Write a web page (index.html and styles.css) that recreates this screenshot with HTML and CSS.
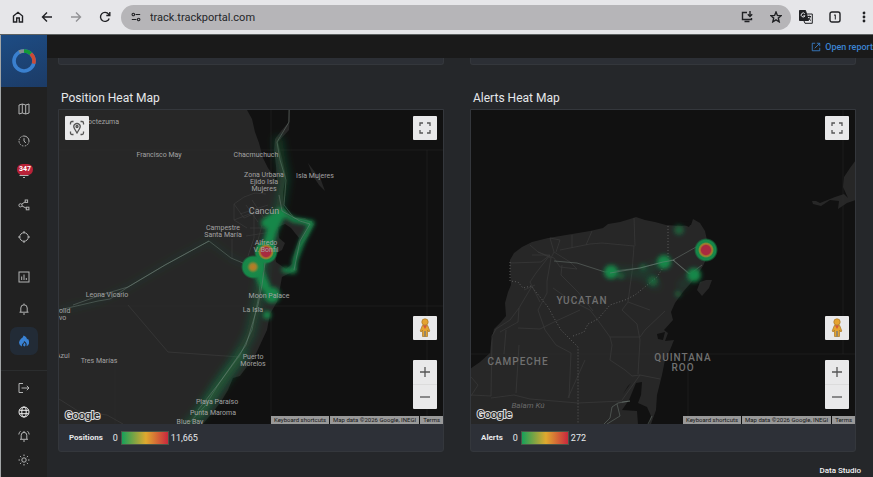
FILE: index.html
```html
<!DOCTYPE html>
<html lang="en">
<head>
<meta charset="utf-8">
<title>Track Portal</title>
<link rel="stylesheet" href="styles.css">
</head>
<body>
<header class="browser">
  <button class="tool" aria-label="Home"><svg viewBox="0 0 12 12"><path d="M1.500 5 6 1.300 10.500 5V11H7.300V7H4.700V11H1.500Z"/></svg></button>
  <button class="tool" aria-label="Back"><svg viewBox="0 0 12 12"><path d="M11 6H1.500M6 1.500 1.500 6 6 10.500"/></svg></button>
  <button class="tool faded" aria-label="Forward"><svg viewBox="0 0 12 12"><path d="M1 6H10.500M6 1.500 10.500 6 6 10.500"/></svg></button>
  <button class="tool" aria-label="Reload"><svg viewBox="0 0 12 12"><path d="M10.200 7.500A4.500 4.500 0 1 1 9.600 3.200L10.800 4.400M10.800 1V4.500H7.300"/></svg></button>
  <div class="address">
    <svg class="tune" viewBox="0 0 12 12"><path d="M5.500 3H11M1 9H6.500"/><circle cx="2.800" cy="3" r="1.500"/><circle cx="9.200" cy="9" r="1.500"/></svg>
    <input class="url" type="text" aria-label="Address" value="track.trackportal.com">
    <button class="tool" aria-label="Install"><svg viewBox="0 0 12 12"><path d="M6 1.500H1.500V8.500H10.500V7M9 0V5M6.800 3.200 9 5.400 11.200 3.200M3.500 10.500H8.500"/></svg></button>
    <button class="tool" aria-label="Bookmark"><svg viewBox="0 0 12 12"><path d="M6 1 7.400 4.400 11.100 4.700 8.300 7.100 9.200 10.800 6 8.800 2.800 10.800 3.700 7.100 .9 4.700 4.600 4.400Z"/></svg></button>
  </div>
  <button class="tool" aria-label="Translate"><svg class="wide" viewBox="0 0 14 14"><path d="M7 4H13.300V13.300H6L5 11" /><path class="solid" d="M.5.5H6.500L9.500 10.500H.5Z"/><path class="cut" d="M5.800 3.800A2 2 0 1 0 6 5.800H4.300"/><path class="thin" d="M8.500 6.500H12M10.200 5.500V6.500M11.300 6.500Q11 9 8.800 10.500M9.300 8Q10.300 9.500 12 10.500"/></svg></button>
  <button class="tool" aria-label="Tabs"><svg viewBox="0 0 12 12"><rect x="1" y="1" width="10" height="10" rx="2"/><path class="thin" d="M5 4.300 6.300 3.800V8.500"/></svg></button>
  <button class="tool last" aria-label="Menu"><svg viewBox="0 0 12 12"><g class="solid"><circle cx="6" cy="2" r=".7"/><circle cx="6" cy="6" r=".7"/><circle cx="6" cy="10" r=".7"/></g></svg></button>
</header>

<div class="app">
  <aside class="sidebar">
    <a class="brand" href="#" aria-label="Track Portal">
      <svg viewBox="0 0 24 24"><g fill="none" stroke-width="3.600"><circle cx="12" cy="12" r="10" stroke="#3a80cf"/><path d="M7.200 3.200A10 10 0 0 1 12 2" stroke="#858d91"/><path d="M12 2A10 10 0 0 1 18.800 4.700" stroke="#129b36"/><path d="M18.800 4.700A10 10 0 0 1 21.600 14.600" stroke="#ce4a34"/></g></svg>
    </a>
    <nav class="nav">
      <a href="#" aria-label="Map"><svg viewBox="0 0 12 12"><path d="M1 2 4.300 1 7.700 2 11 1V10L7.700 11 4.300 10 1 11ZM4.300 1V10M7.700 2V11"/></svg></a>
      <a href="#" aria-label="History"><svg viewBox="0 0 12 12"><path stroke-dasharray="1.600 1" d="M6 1A5 5 0 0 0 6 11"/><path d="M6 1A5 5 0 0 1 11 6" /><path stroke-dasharray="1.600 1" d="M11 6A5 5 0 0 1 6 11"/><path d="M6 3.200V6L7.800 8"/></svg></a>
      <a href="#" aria-label="Alerts"><svg viewBox="0 0 12 12"><path d="M1.500 8.500H10.500M5 10.500H7M3 8.500V4.500A3 3 0 0 1 9 4.500V8.500"/></svg><span class="badge">347</span></a>
      <a href="#" aria-label="Routes"><svg viewBox="0 0 12 12"><rect x="7.200" y="1" width="2.400" height="2.400"/><circle cx="2.500" cy="6.300" r="1.600"/><rect x="8.300" y="8.200" width="2.600" height="2.600"/><path d="M7.200 2.800 3.700 5.200M4 7 8.300 9.200"/></svg></a>
      <a href="#" aria-label="Geofence"><svg viewBox="0 0 12 12"><circle cx="6" cy="6" r="4.300"/><path d="M6 0V2.300M6 9.700V12M0 6H2.300M9.700 6H12"/></svg></a>
      <a class="spaced" href="#" aria-label="Reports"><svg viewBox="0 0 12 12"><rect x="1" y="1" width="10" height="10"/><path d="M3.700 5.500V9M6 3.500V9M8.300 7V9"/></svg></a>
      <a href="#" aria-label="Notifications"><svg viewBox="0 0 12 12"><path d="M1.500 9.200H10.500M2.800 9V5A3.200 3.200 0 0 1 9.200 5V9M6 .5V1.800M5 11H7"/></svg></a>
      <a class="active" href="#" aria-label="Heat maps"><svg viewBox="0 0 12 12"><path class="flame" d="M5.500.5Q9 2 9 4.500L10 3.700Q11.500 6 11 8.500 10.500 10.500 8.500 11.300 9.500 8 6 6 6.200 7.500 4.700 8.500 3.400 9.700 4 11.400 1.200 10.500 1 7.700 1 5.500 3 3.700 5.500 2.500 5.500.5ZM6.500 7.500Q8.500 9.500 6.700 11.500 4.500 11 5.300 9.500Z"/></svg></a>
    </nav>
    <nav class="nav foot">
      <a href="#" aria-label="Log out"><svg viewBox="0 0 12 12"><path d="M5 1.500H1V10.500H5M3.500 6H11M8.800 3.800 11 6 8.800 8.200"/></svg></a>
      <a class="bright" href="#" aria-label="Language"><svg viewBox="0 0 12 12"><circle cx="6" cy="6" r="5"/><ellipse cx="6" cy="6" rx="2.200" ry="5"/><path d="M1.500 4.300H10.500M1.500 7.700H10.500"/></svg></a>
      <a href="#" aria-label="Sound"><svg viewBox="0 0 12 12"><path d="M2 9.300H10M3.200 9V5.200A2.800 2.800 0 0 1 8.800 5.200V9M6 1V2.300M5 11H7M.8 4.500Q1 2.500 2.500 1.200M11.200 4.500Q11 2.500 9.500 1.200"/></svg></a>
      <a href="#" aria-label="Theme"><svg viewBox="0 0 12 12"><circle cx="6" cy="6" r="2.200"/><path d="M6 .5V2M6 10V11.500M.5 6H2M10 6H11.500M2.100 2.100 3.200 3.200M8.800 8.800 9.900 9.900M2.100 9.900 3.200 8.800M8.800 3.200 9.900 2.100"/></svg></a>
    </nav>
  </aside>

  <main class="main">
    <div class="topbar">
      <a class="open" href="#"><svg viewBox="0 0 12 12"><path d="M5 1.500H1.500V10.500H10.500V7M7 1.500H10.500V5M10.500 1.500 4.500 7.500"/></svg>Open report</a>
    </div>
    <div class="report">
      <section class="column">
        <div class="previous"></div>
        <h2>Position Heat Map</h2>
        <div class="card">
          <div class="map">
            <svg class="canvas" viewBox="59 110 384 314" preserveAspectRatio="xMidYMid slice">
              <defs>
                <filter id="soft" x="-30%" y="-30%" width="160%" height="160%"><feGaussianBlur stdDeviation="2"/></filter>
                <filter id="wide" x="-30%" y="-30%" width="160%" height="160%"><feGaussianBlur stdDeviation="4"/></filter>
                <radialGradient id="hot"><stop offset="0" stop-color="#a82a40"/><stop offset=".38" stop-color="#a82a40"/><stop offset=".48" stop-color="#a8702c"/><stop offset=".56" stop-color="#8a8535"/><stop offset=".66" stop-color="#168749"/><stop offset=".82" stop-color="#168749"/><stop offset="1" stop-color="#168749" stop-opacity="0"/></radialGradient>
                <radialGradient id="warm"><stop offset="0" stop-color="#c07a22"/><stop offset=".25" stop-color="#a0812d"/><stop offset=".5" stop-color="#1c8848"/><stop offset=".82" stop-color="#168749"/><stop offset="1" stop-color="#168749" stop-opacity="0"/></radialGradient>
              </defs>
              <rect class="land" x="0" y="0" width="900" height="500"/>
              <path class="sea" d="M247 110 252 119 255 132 259 143 263 158 268 168 274 176 277 184 276 166 274 150 275 139 281 131 288 123 289 110H900V500H150L203 424 213 412 222 400 228 390 233 378 240 376 246 368 254 358 260 345 267 330 270 314 277 302 280 288 282 277 290 273 297 270 295 262 300 248 308 236 314 224 305 218 292 217 284 208 283 192 286 176 282 158 278 142 289 130 290 110Z"/>
              <path class="sea" d="M278 227 285 224 291 228 299 238 295 250 292 264 286 269 276 262 275 254 282 250 285 243 279 238Z"/>
              <path class="land" d="M308 163 314 171 321 180 325 191 319 185 313 176Z"/>
              <g class="grid"><path d="M271 110V424M59 306H443M427 150V424M59 150H443M115 360V424"/></g>
              <g class="street"><path d="M234 204 244 197 255 193 266 194M234 204V220L247 228M234 220 252 213M240 214 268 205M246 205 258 222M252 200 264 218M254 213V238L248 256M262 225 258 240M232 239V258M234 204 244 218 262 210M264 218 283 213M250 228H268M246 236 272 232"/><path d="M128 305 168 352 240 357M59 399 78 411 107 415 123 424"/></g>
              <path class="road" d="M59 310 98 301 110 299 128 287 165 265 209 241"/>
              <path class="road" d="M73 305 101 295 128 287 165 265 209 241 231 258 255 268M289 110V122L277 142 280 160 286 180 284 205 294 218 312 222M263 255 262 272 258 300 252 330 240 355 220 382 205 406 188 424"/>
              <path class="haze thin-haze" d="M59 310 98 301 128 287 165 265 209 241 231 258 255 268"/>
              <path class="haze" d="M278 137 281 158 285 178 280 206 266 250 262 272 258 300 250 335 237 358 217 385 200 412 184 430"/>
              <g class="heat"><path d="M266 223 277 213 273 226 266 250M282 213 294 220 312 223 302 242 295 260 294 271 284 270M252 268 265 285 274 294" stroke-width="5"/><path d="M266 223 281 213 272 230 266 252 257 268 265 286" stroke-width="10"/><circle cx="272" cy="295" r="8"/><circle cx="267" cy="315" r="4"/><circle cx="309" cy="223" r="3"/></g>
              <path class="haze" d="M245 352 222 384 198 418"/>
              <path class="road" d="M279 195 282 211 300 221 310 224 300 241 294 270M266 255 262 285 258 305 246 345 220 382 198 410"/>
              <circle cx="253" cy="267" r="12" fill="url(#warm)"/>
              <circle cx="266" cy="252" r="12" fill="url(#hot)"/>
              <g class="place">
                <text class="edge" x="88" y="124">octezuma</text><text x="159" y="157">Francisco May</text><text x="256" y="157">Chacmuchuch</text>
                <text x="264" y="177">Zona Urbana</text><text x="264" y="184">Ejido Isla</text><text x="264" y="191">Mujeres</text><text x="315" y="178">Isla Mujeres</text>
                <text class="city" x="264" y="214">Cancún</text><text x="223" y="230">Campestre</text><text x="223" y="237">Santa María</text><text x="266" y="245">Alfredo</text><text x="266" y="252">V. Bonfil</text>
                <text x="107" y="297">Leona Vicario</text><text class="edge" x="59" y="313">olid</text><text class="edge" x="59" y="320">vo</text><text class="edge" x="56" y="358">Azul</text><text x="99" y="363">Tres Marías</text>
                <text x="269" y="298">Moon Palace</text><text x="253" y="312">La Isla</text><text x="253" y="359">Puerto</text><text x="253" y="366">Morelos</text><text x="217" y="404">Playa Paraíso</text><text x="213" y="415">Punta Maroma</text><text x="190" y="424">Blue Bay</text>
              </g>
              <text class="google" x="65" y="419">Google</text>
            </svg>
            <button class="control focus" aria-label="Focus location"><svg viewBox="0 0 16 16"><path d="M1.500 4.500V3Q1.500 1.500 3 1.500H4.500M11.500 1.500H13Q14.500 1.500 14.500 3V4.500M14.500 11.500V13Q14.500 14.500 13 14.500H11.500M4.500 14.500H3Q1.500 14.500 1.500 13V11.500M8 13 5.400 8.500Q4 6.200 5.600 4.400 8 2.600 10.400 4.400 12 6.200 10.600 8.500Z"/><circle cx="8" cy="6.500" r="1"/></svg></button>
            <button class="control full" aria-label="Full screen"><svg viewBox="0 0 12 12"><path d="M1 4V1H4M8 1H11V4M11 8V11H8M4 11H1V8"/></svg></button>
            <div class="stack">
              <button class="control" aria-label="Street View"><svg class="pegman" viewBox="0 0 14 20"><path fill="#e5a32f" stroke="#a87726" stroke-width=".7" d="M4.300 7.500H9.700L11.800 13 10.800 14 9.500 12V18.500H4.500V12L3.200 14 2.200 13Z"/><circle cx="7" cy="4" r="3.200" fill="#e5a32f" stroke="#a87726" stroke-width=".7"/><path fill="#d4573a" d="M5 7.500H9L7 11Z"/><path d="M7 13V18.500" stroke="#6d7885"/></svg></button>
              <div class="zoom"><button aria-label="Zoom in"><svg viewBox="0 0 12 12"><path d="M6 1V11M1 6H11"/></svg></button><button aria-label="Zoom out"><svg viewBox="0 0 12 12"><path d="M1 6H11"/></svg></button></div>
            </div>
            <div class="credits"><a href="#">Keyboard shortcuts</a><span>Map data ©2026 Google, INEGI</span><a href="#">Terms</a></div>
          </div>
          <div class="legend"><strong>Positions</strong><span>0</span><i class="scale"></i><span>11,665</span></div>
        </div>
      </section>

      <section class="column">
        <div class="previous"></div>
        <h2>Alerts Heat Map</h2>
        <div class="card">
          <div class="map">
            <svg class="canvas" viewBox="471 110 384 314" preserveAspectRatio="xMidYMid slice">
              <rect class="sea" x="300" y="0" width="800" height="600"/>
              <path class="land" d="M470 369 480 362 490 353 491 343 494 329 501 322 506 316 505 303 508 292 511 285 510 269 510 260 514 253 522 247 532 242 548 238 566 235 590 231 603 228 608 224 620 222 630 219 636 217 645 220 655 222 666 225 680 226 691 225 693 219 700 223 705 231 707 240 708 255 703 266 697 275 690 284 683 292 675 303 671 312 673 320 664 330 668 333 665 341 674 340 670 350 665 360 662 375 657 395 656 410 651 424 640 600H300Z"/>
              <path class="sea" d="M678 222 692 221 689 227ZM636 383 642 382 641 395 638 403 647 407 651 416 649 424H638L637 411 622 410 629 400ZM628 386 631 383 623 394ZM657 334 665 332 663 340 658 339Z"/>
              <path class="land" d="M697 290 700 282 706 280 712 280 709 288 702 296ZM812 201 816 201 820 203 825 201 835 197 844 194 848 198 843 187 844 177 850 168 856 160V200L847 203 838 209 839 201 830 200 821 206 813 204Z"/>
              <g class="grid"><path d="M471 354H855M688 354V424M843 110V354"/></g>
              <g class="street"><path d="M550 238 554 252 570 262 577 269 560 267 554 258 538 252 530 245M550 238 560 240 556 252M532 255H550L541 262 510 263M550 255 536 273 530 282 540 302M551 258 547 281M560 250 590 244 602 243 634 246 632 272M572 235V248M592 231 586 245M634 218 635 246M554 252 551 258 538 252"/><path d="M562 265 561 275 578 292 593 311M532 286 519 308 510 320 496 329 492 336 491 396 471 395M547 281V293L538 310 545 330M535 285 524 290M519 308 518 322 500 332M518 328 540 329 554 322 580 310M545 330 556 345 571 353 569 398M553 288 570 300 590 310 597 319 610 337 612 345 610 360 625 370 632 376 640 375 660 379M632 272 628 302 622 310 637 324 640 340 638 374M610 337 640 337 645 330 665 311M628 302 650 310M471 377 478 385 471 396M491 398 514 395 530 399 578 403 622 401M585 360 568 398M640 375 622 400M506 330 504 354M519 345 516 393"/></g>
              <path class="road" d="M554 261 577 263 605 272 640 268 663 262 673 260 705 242M673 260 690 274 702 265M673 260 689 274"/>
              <path class="road" d="M622 402 630 401 618 403 612 407 610 418 604 424M617 404 620 416 607 424M648 424 652 416"/>
              <path class="border" d="M510 262V281L518 282 523 288 531 286 540 297 548 307 554 318 561 330 578 347V424M573 336 584 332 588 324 598 319 610 305 625 300 635 295 646 286 657 277 668 260V225"/>
              <g class="haze"><path d="M612 271 640 273 660 264M644 276 658 287M690 277 680 289" stroke-width="4"/></g>
              <g class="heat"><circle cx="611" cy="272" r="7"/><circle cx="664" cy="262" r="7"/><circle cx="694" cy="275" r="7"/><g opacity=".55"><circle cx="679" cy="230" r="5"/><circle cx="653" cy="281" r="5"/><circle cx="621" cy="276" r="3"/><circle cx="643" cy="267" r="3"/><circle cx="678" cy="294" r="3"/></g></g>
              <path class="road" d="M610 273 640 268 663 262 675 260"/>
              <circle cx="706" cy="250" r="12" fill="url(#hot)"/>
              <g class="state"><text x="582" y="304">YUCATAN</text><text x="518" y="365">CAMPECHE</text><text x="683" y="361">QUINTANA</text><text x="683" y="371">ROO</text></g>
              <text class="park" x="528" y="408">Balam Kú</text>
              <text class="google" x="477" y="418">Google</text>
            </svg>
            <button class="control full" aria-label="Full screen"><svg viewBox="0 0 12 12"><path d="M1 4V1H4M8 1H11V4M11 8V11H8M4 11H1V8"/></svg></button>
            <div class="stack">
              <button class="control" aria-label="Street View"><svg class="pegman" viewBox="0 0 14 20"><path fill="#e5a32f" stroke="#a87726" stroke-width=".7" d="M4.300 7.500H9.700L11.800 13 10.800 14 9.500 12V18.500H4.500V12L3.200 14 2.200 13Z"/><circle cx="7" cy="4" r="3.200" fill="#e5a32f" stroke="#a87726" stroke-width=".7"/><path fill="#d4573a" d="M5 7.500H9L7 11Z"/><path d="M7 13V18.500" stroke="#6d7885"/></svg></button>
              <div class="zoom"><button aria-label="Zoom in"><svg viewBox="0 0 12 12"><path d="M6 1V11M1 6H11"/></svg></button><button aria-label="Zoom out"><svg viewBox="0 0 12 12"><path d="M1 6H11"/></svg></button></div>
            </div>
            <div class="credits"><a href="#">Keyboard shortcuts</a><span>Map data ©2026 Google, INEGI</span><a href="#">Terms</a></div>
          </div>
          <div class="legend"><strong>Alerts</strong><span>0</span><i class="scale"></i><span>272</span></div>
        </div>
      </section>
    </div>
    <footer class="credit"><a href="#">Data Studio</a></footer>
  </main>
</div>
</body>
</html>
```
FILE: styles.css
```css
* { box-sizing: border-box; }
body {
  margin: 0;
  min-height: 100vh;
  display: flex;
  flex-direction: column;
  overflow: hidden;
  background: #25272a;
  color: #e6e8ea;
  font-family: Roboto, "Liberation Sans", sans-serif;
  font-size: 9px;
}
a { color: inherit; text-decoration: none; }
button { border: 0; padding: 0; background: none; color: inherit; font: inherit; }
svg { fill: none; stroke: currentColor; }

.browser {
  display: flex;
  align-items: center;
  height: 34px;
  padding-left: 3px;
  background: #e6e6e9;
  color: #202124;
}
.tool { flex: none; width: 29px; height: 24px; display: grid; place-items: center; }
.tool svg { width: 12px; height: 12px; stroke-width: 1.4; }
.tool svg.wide { width: 14px; height: 14px; stroke-width: 1; }
.tool .solid { fill: currentColor; }
.tool .cut { stroke: #e6e6e9; }
.tool .thin { stroke-width: 1; }
.faded { color: #929295; }
.last { width: 24px; padding-left: 5px; }
.address {
  flex: 1;
  min-width: 0;
  display: flex;
  align-items: center;
  height: 25px;
  margin-left: 2px;
  padding: 0 1px 0 10px;
  border-radius: 13px;
  background: #b6b5b8;
}
.tune { flex: none; width: 10px; height: 10px; stroke-width: 1.3; }
.url {
  flex: 1;
  min-width: 0;
  padding: 0 0 0 9px;
  border: 0;
  background: none;
  color: #242528;
  font: 11px Roboto, sans-serif;
}

.app { flex: 1; display: flex; border-top: 1px solid #5d6161; }
.sidebar {
  flex: none;
  width: 47px;
  border-left: 1px solid #a2a5a6;
  background: #212121;
  color: #b4b5b5;
}
.brand {
  display: grid;
  place-items: center;
  height: 52px;
  background: linear-gradient(160deg, #1d4c84, #1c3b66);
}
.brand svg { width: 24px; height: 24px; }
.nav { display: flex; flex-direction: column; align-items: center; gap: 4px; padding: 8px 0 15px; }
.nav a { position: relative; width: 28px; height: 28px; display: grid; place-items: center; border-radius: 7px; }
.nav svg { width: 12px; height: 12px; stroke-width: 1; }
.nav .spaced { margin-top: 8px; }
.nav .active { background: #222b36; color: #3982d4; }
.nav .flame { fill: currentColor; stroke: none; }
.nav .bright { color: #f0f0f0; }
.nav.foot { gap: 0; padding: 5px 0; border-top: 1px solid #2b2d2e; }
.foot a { height: 24px; }
.badge {
  position: absolute;
  top: 5px;
  left: 7px;
  width: 16px;
  border-radius: 6px;
  background: #b92238;
  color: #fff;
  font-size: 7px;
  font-weight: 700;
  line-height: 11px;
  text-align: center;
}

.main { flex: 1; min-width: 0; }
.topbar {
  display: flex;
  justify-content: flex-end;
  align-items: center;
  height: 23px;
  background: #1a1a1a;
}
.open { display: flex; align-items: center; gap: 4px; color: #3b84d2; font-weight: 500; }
.open svg { width: 10px; height: 10px; }
.report { display: grid; grid-template-columns: 1fr 1fr; gap: 26px; padding: 0 17px 0 11px; }
.column { min-width: 0; }
.previous { height: 7px; border: 1px solid #34373c; border-top: 0; border-radius: 0 0 3px 3px; background: #2c2f35; }
h2 { margin: 23px 0 1px; padding-left: 3px; font-size: 12px; font-weight: 400; line-height: 20px; }
.card { overflow: hidden; border: 1px solid #34373c; border-radius: 0 0 3px 3px; background: #2d3037; }
.map { position: relative; height: 314px; overflow: hidden; }
.canvas { display: block; width: 100%; height: 100%; stroke: none; }
.land { fill: #272727; }
.sea { fill: #111; }
.grid { stroke: #303030; stroke-opacity: .35; }
.street { fill: none; stroke: #3b3b3b; stroke-width: 1; stroke-opacity: .7; }
.road { fill: none; stroke: #78867f; stroke-opacity: .45; stroke-width: 1; }
.border { fill: none; stroke: #5c5c5c; stroke-dasharray: 1 2; }
.haze { fill: none; stroke: #168749; stroke-opacity: .4; stroke-width: 8; filter: url(#wide); }
.thin-haze { stroke-opacity: .15; stroke-width: 4; }
.heat { fill: #168749; stroke: none; filter: url(#soft); }
.heat path { fill: none; stroke: #168749; stroke-linecap: round; stroke-linejoin: round; }
.place { fill: #a3a3a3; stroke: none; font-size: 7px; text-anchor: middle; }
.place .city { font-size: 9px; }
.place .edge { text-anchor: start; }
.state { fill: #707070; font-size: 10px; font-weight: 500; letter-spacing: 1px; text-anchor: middle; }
.park { fill: #6a6a6a; font-size: 8px; font-style: italic; text-anchor: middle; }
.google { fill: #292929; stroke: #d8d8d8; stroke-width: 2px; paint-order: stroke; font-size: 11px; font-weight: 500; }

.control, .zoom { width: 24px; border-radius: 1px; background: #e9e9ea; color: #555; }
.control { height: 24px; display: grid; place-items: center; }
.control svg, .zoom svg { width: 12px; height: 12px; stroke-width: 1.3; }
.focus { position: absolute; top: 6px; left: 6px; }
.control.focus svg { width: 16px; height: 16px; }
.full { position: absolute; top: 6px; right: 6px; }
.stack { position: absolute; right: 6px; bottom: 15px; display: grid; gap: 20px; }
.control .pegman { width: 14px; height: 20px; stroke: none; }
.zoom button { display: grid; place-items: center; width: 100%; height: 24px; }
.zoom button + button { border-top: 1px solid #dcdcdc; height: 25px; }
.credits {
  position: absolute;
  right: 0;
  bottom: 0;
  display: flex;
  gap: 1px;
  color: #161616;
  font-size: 6px;
  line-height: 8px;
  white-space: nowrap;
}
.credits > * { padding: 0 3px; background: #999; }
.legend { display: flex; align-items: center; height: 27px; padding-left: 10px; }
.legend strong { margin-right: 10px; font-size: 8px; font-weight: 700; }
.scale { width: 48px; height: 14px; margin: 0 2px 0 3px; border: 1px solid #4b5547; background: linear-gradient(90deg, #17a05a, #dfa92f 52%, #c9283d); }
.credit { padding: 12px 12px 0 0; text-align: right; font-size: 8px; font-weight: 500; line-height: 13px; color: #f2f2f2; }
```
